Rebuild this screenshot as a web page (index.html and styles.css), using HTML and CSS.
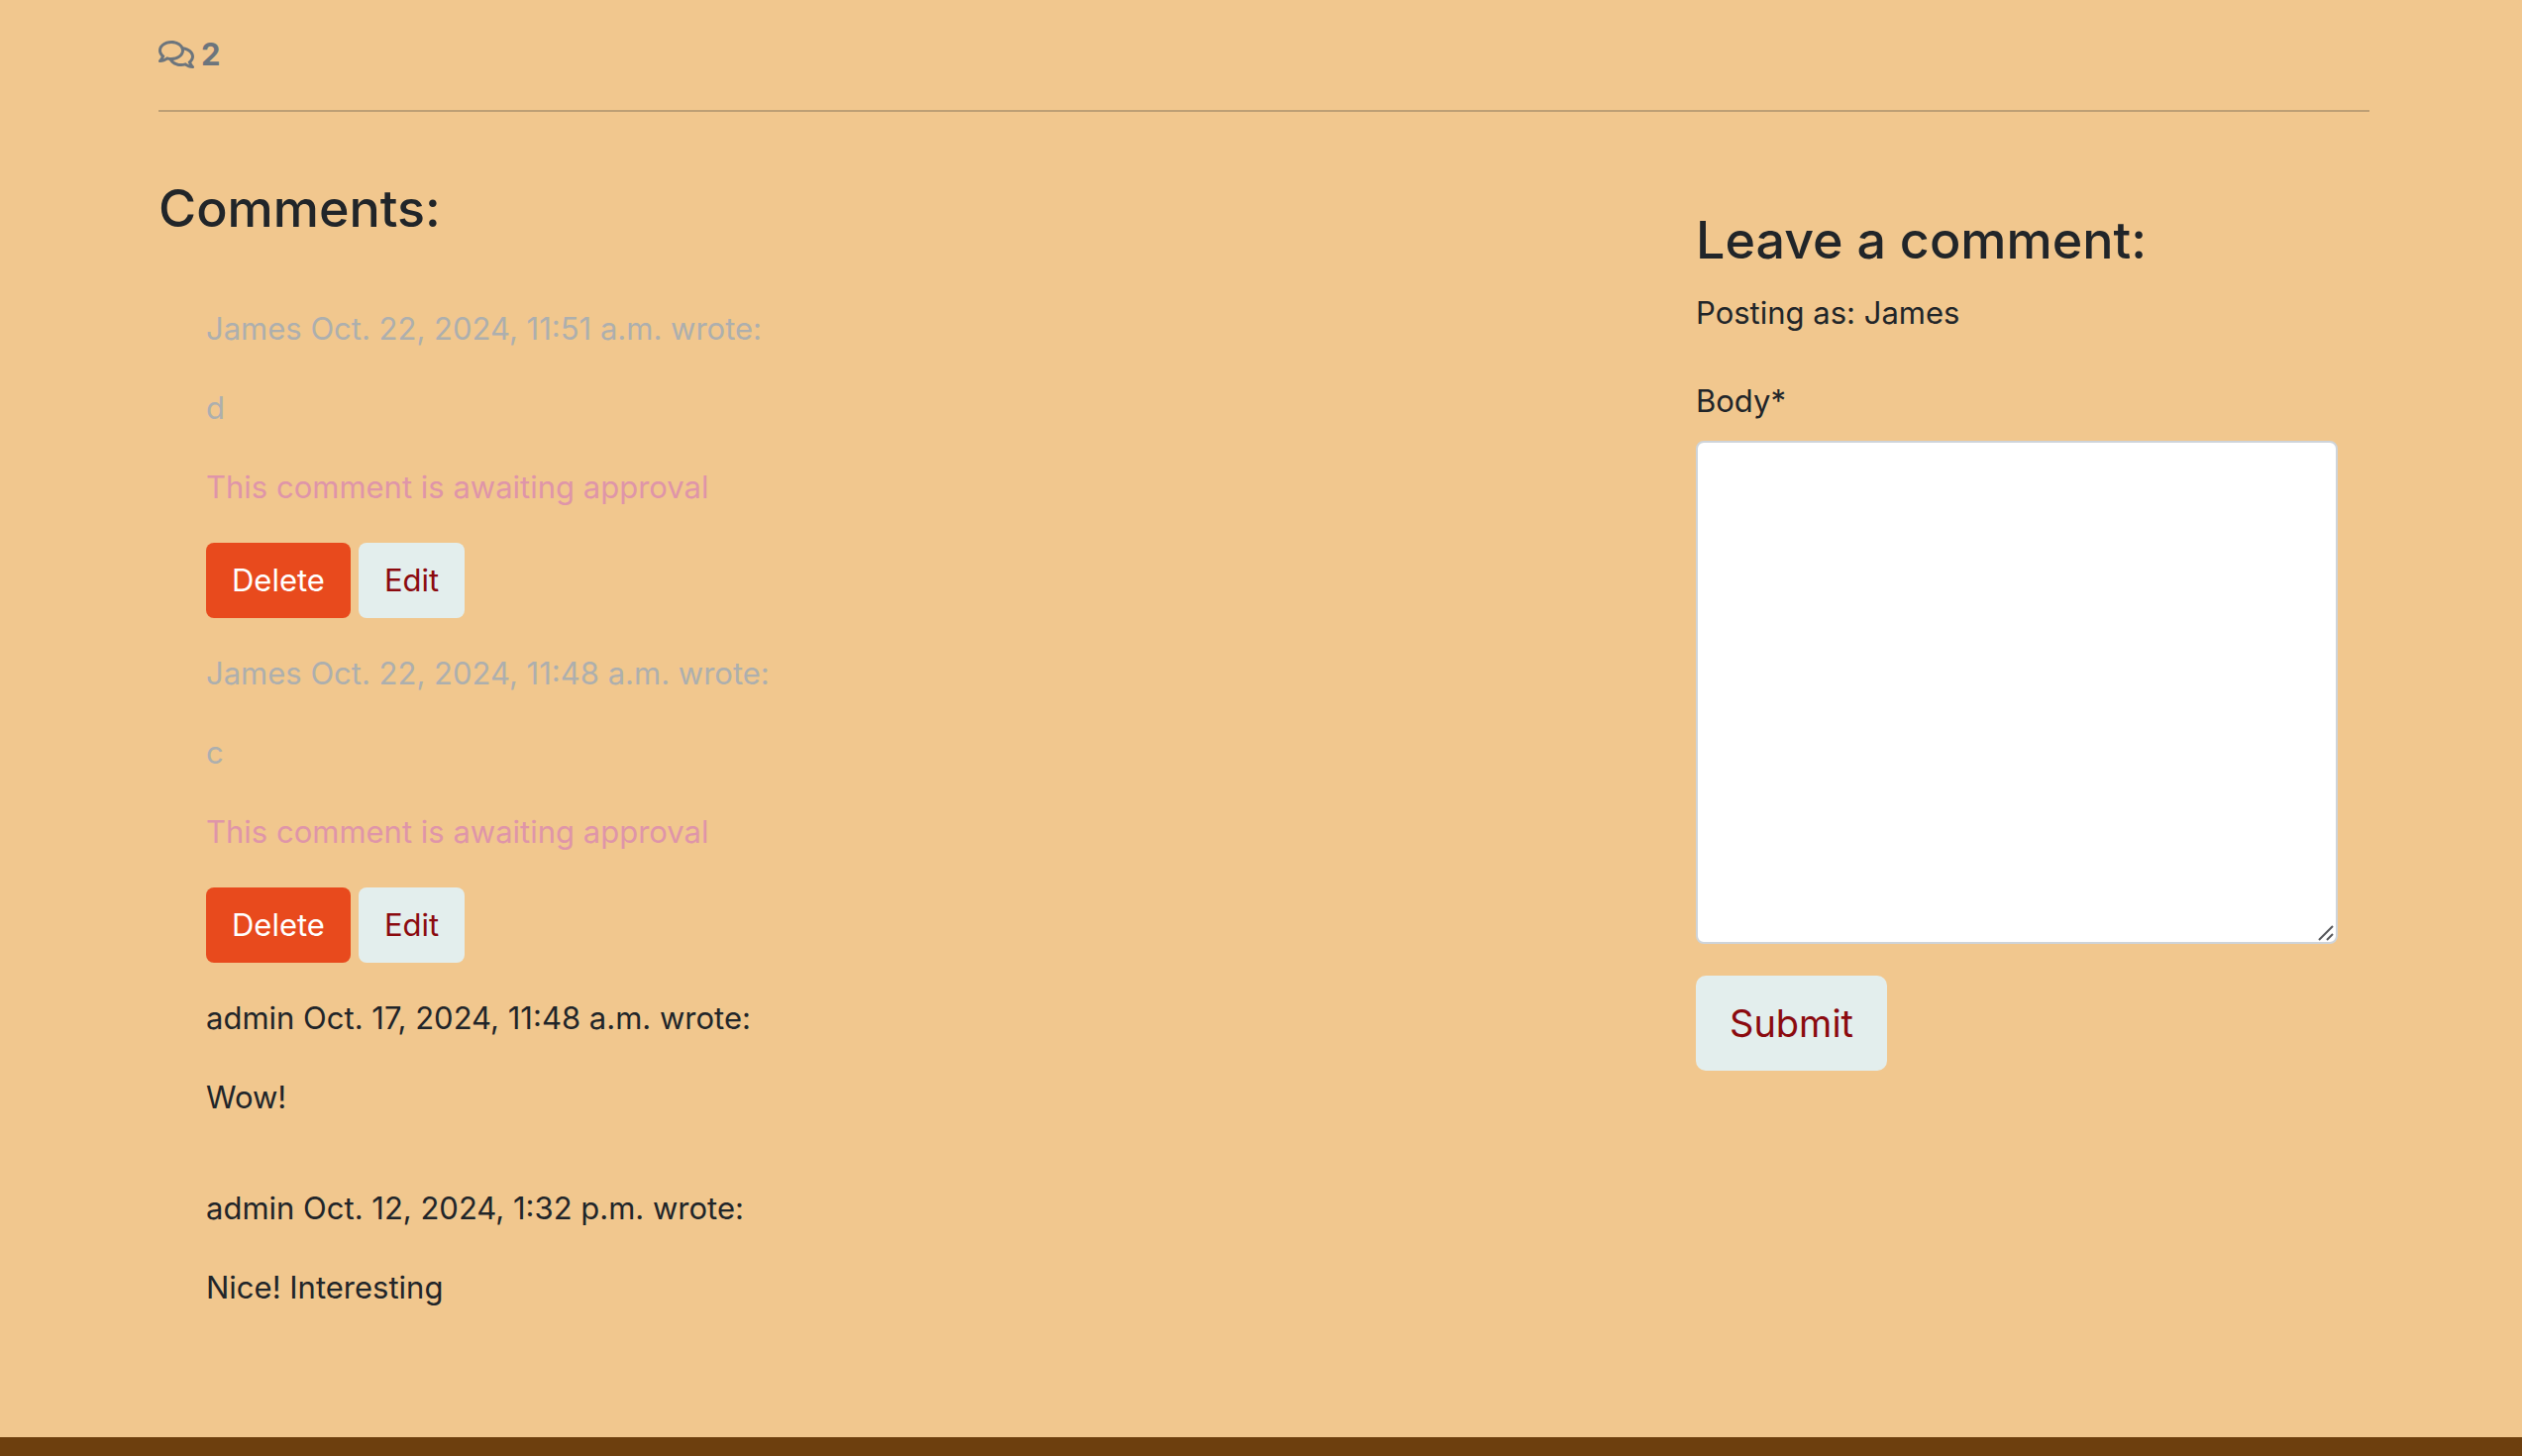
FILE: index.html
```html
<!DOCTYPE html>
<html lang="en">
<head>
  <meta charset="utf-8">
  <meta name="viewport" content="width=device-width, initial-scale=1">
  <title>Comments</title>
  <link rel="stylesheet" href="styles.css">
</head>
<body>
  <main class="container">
    <p class="comment-count">
      <svg class="icon" viewBox="0 0 576 512" aria-hidden="true"><path d="M532 386.2c27.5-27.1 44-61.1 44-98.2 0-80-76.5-146.1-176.2-157.9C368.3 72.5 294.3 32 208 32 93.1 32 0 103.6 0 192c0 37 16.5 71 44 98.2-15.3 30.7-37.3 54.5-37.7 54.9-6.3 6.7-8.1 16.5-4.4 25 3.6 8.5 12 14 21.2 14 53.5 0 96.7-20.2 125.2-38.8 9.2 2.1 18.7 3.7 28.4 4.9C208.1 407.6 281.8 448 368 448c20.8 0 40.8-2.4 59.8-6.8C456.3 459.7 499.4 480 553 480c9.2 0 17.5-5.5 21.2-14 3.6-8.5 1.9-18.3-4.4-25-.4-.3-22.5-24.1-37.8-54.8zm-392.8-92.3L122.1 305c-14.1 9.1-28.5 16.3-43.1 21.4 2.7-4.7 5.4-9.7 8-14.8l15.5-31.1L77.7 256C64.2 242.6 48 220.7 48 192c0-60.7 73.3-112 160-112s160 51.3 160 112-73.3 112-160 112c-16.5 0-33-1.9-49-5.6l-19.8-4.5zM498.3 352l-24.7 24.4 15.5 31.1c2.6 5.1 5.3 10.1 8 14.8-14.6-5.1-29-12.3-43.1-21.4l-17.1-11.1-19.9 4.6c-16 3.7-32.5 5.6-49 5.6-54 0-102.2-20.1-131.3-49.7C338 339.5 416 272.9 416 192c0-3.4-.4-6.7-.7-10C479.7 196.5 528 238.8 528 288c0 28.7-16.2 50.6-29.7 64z"/></svg>
      <strong>2</strong>
    </p>
    <hr class="rule">
    <div class="row">
      <section class="comments">
        <h3 class="title">Comments:</h3>
        <div class="comment-list">
          <article class="comment">
            <p class="text faded">James Oct. 22, 2024, 11:51 a.m. wrote:</p>
            <p class="text faded">d</p>
            <p class="text approval">This comment is awaiting approval</p>
            <div class="actions">
              <button type="button" class="btn btn-delete">Delete</button>
              <button type="button" class="btn btn-edit">Edit</button>
            </div>
          </article>
          <article class="comment">
            <p class="text faded">James Oct. 22, 2024, 11:48 a.m. wrote:</p>
            <p class="text faded">c</p>
            <p class="text approval">This comment is awaiting approval</p>
            <div class="actions">
              <button type="button" class="btn btn-delete">Delete</button>
              <button type="button" class="btn btn-edit">Edit</button>
            </div>
          </article>
          <article class="comment">
            <p class="text">admin Oct. 17, 2024, 11:48 a.m. wrote:</p>
            <p class="text">Wow!</p>
          </article>
          <article class="comment">
            <p class="text">admin Oct. 12, 2024, 1:32 p.m. wrote:</p>
            <p class="text">Nice! Interesting</p>
          </article>
        </div>
      </section>
      <section class="leave">
        <h3 class="title">Leave a comment:</h3>
        <p class="posting">Posting as: James</p>
        <form class="form">
          <label class="label" for="body">Body*</label>
          <div class="field">
            <textarea class="textarea" id="body" name="body" rows="10" required></textarea>
            <svg class="grip" viewBox="0 0 16 16" aria-hidden="true"><path d="M1 15 15 1M9 15l6-6"/></svg>
          </div>
          <button type="submit" class="btn btn-submit">Submit</button>
        </form>
      </section>
    </div>
  </main>
  <footer class="footer"></footer>
</body>
</html>
```
FILE: styles.css
```css
* {
  box-sizing: border-box;
}

body {
  margin: 0;
  padding-left: 6px;
  min-height: 100vh;
  display: flex;
  flex-direction: column;
  background: #f1c78e;
  color: #212529;
  font-family: Inter, "Liberation Sans", sans-serif;
  font-size: 31px;
  line-height: 48px;
}

p,
h3 {
  margin: 0;
}

.container {
  width: 100%;
  max-width: 2280px;
  margin: 0 auto;
  padding: 31px 24px 47px;
}

.comment-count {
  display: flex;
  align-items: center;
  gap: 7px;
  color: #6c757d;
}

.icon {
  width: 36px;
  height: 32px;
  fill: currentColor;
}

.rule {
  height: 2px;
  margin: 32px 0 64px;
  border: 0;
  background: #bd9f75;
}

.row {
  display: grid;
  grid-template-columns: 2fr 1fr;
  margin: 0 -24px;
}

.comments {
  padding: 0 24px;
}

.title {
  margin-bottom: 16px;
  font-size: 52px;
  font-weight: 500;
  line-height: 67px;
}

.comment-list {
  display: flex;
  flex-direction: column;
  gap: 32px;
  padding: 48px;
}

.text {
  margin-bottom: 32px;
}

.comment:last-child .text:last-child {
  margin-bottom: 0;
}

.comment:last-child {
  padding-bottom: 32px;
}

.faded {
  color: #adafae;
}

.approval {
  color: #df95a9;
}

.actions {
  display: flex;
  gap: 8px;
}

.btn {
  padding: 12px 24px;
  border: 2px solid transparent;
  border-radius: 8px;
  font: inherit;
  cursor: pointer;
}

.btn-delete {
  background: #e84a1d;
  color: #fff;
}

.btn-edit,
.btn-submit {
  background: #e3eeed;
  color: #8b0a0f;
}

.btn-submit {
  margin-top: 32px;
  padding: 16px 32px;
  border-radius: 10px;
  font-size: 38px;
  line-height: 60px;
}

.leave {
  padding: 32px 56px;
}

.posting {
  margin-bottom: 41px;
}

.form {
  display: flex;
  flex-direction: column;
  align-items: flex-start;
}

.label {
  margin-bottom: 16px;
}

.field {
  position: relative;
  width: 100%;
}

.textarea {
  display: block;
  width: 100%;
  height: 508px;
  padding: 12px 24px;
  border: 2px solid #ced4da;
  border-radius: 8px;
  background: #fff;
  color: inherit;
  font: inherit;
  resize: vertical;
}

.textarea::-webkit-resizer {
  background: transparent;
}

.grip {
  position: absolute;
  right: 4px;
  bottom: 3px;
  width: 16px;
  height: 16px;
  fill: none;
  stroke: #55565a;
  stroke-width: 2;
  pointer-events: none;
}

.footer {
  flex: 1;
  min-height: 18px;
  margin-left: -6px;
  background: #6d3f0e;
}
```
